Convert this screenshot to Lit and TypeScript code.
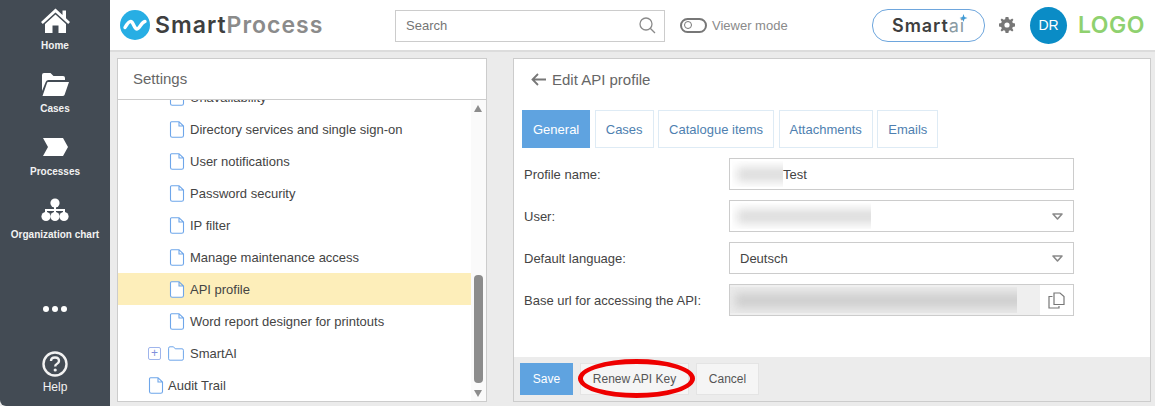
import { LitElement, html, css, svg } from 'lit';
import { customElement } from 'lit/decorators.js';

const navIcons = {
  home: svg`<path d="M14.5 0.5 L21.5 7 V2.5 H25 V10.2 L29 14 L27.2 16 L14.5 4.5 L1.8 16 L0 14 Z M14.5 6.5 L25 16 V25 H17.5 V17.5 H11.5 V25 H4 V16 Z"/>`,
  cases: svg`<path d="M1 3 Q1 1 3 1 H9.5 L12.5 4 H22 Q24 4 24 6 V8 H7.5 Q5.5 8 4.7 10 L1 19 Z M7 10 H28 L23.5 23 Q23 24 21.5 24 H1.5 L6 11 Q6.3 10 7 10 Z"/>`,
  processes: svg`<path d="M0 1 H20 L25 10 L20 19 H0 L5 10 Z"/>`,
  org: svg`<circle cx="14" cy="5" r="4.6"/><circle cx="5" cy="18.5" r="4.6"/><circle cx="14" cy="18.5" r="4.6"/><circle cx="23" cy="18.5" r="4.6"/><path d="M13 8 H15 V11 H24 V15 H22 V13 H15 V15 H13 V13 H6 V15 H4 V11 H13 Z"/>`,
};

const pageIcon = html`<svg class="tree-icon" width="16" height="17" viewBox="0 0 16 17"><path d="M2.5 .7 H10 L14.5 5 V14.5 Q14.5 16.3 12.7 16.3 H3.3 Q1.5 16.3 1.5 14.5 V1.7 Q1.5 .7 2.5 .7 Z M10 .7 V5 H14.5" fill="#fff" stroke="#6ea6ea" stroke-width="1.1"/></svg>`;

const folderIcon = html`<svg class="tree-icon" width="16" height="15" viewBox="0 0 16 15"><path d="M.6 2.2 Q.6 .8 2 .8 H5.5 L7.2 2.8 H14 Q15.4 2.8 15.4 4.2 V12.8 Q15.4 14.2 14 14.2 H2 Q.6 14.2 .6 12.8 Z" fill="#fff" stroke="#6ea6ea" stroke-width="1"/></svg>`;

const caret = html`<svg class="caret" width="11" height="7" viewBox="0 0 11 7"><path d="M1 1 H10 L5.5 6 Z" fill="#fff" stroke="#8a8a8a" stroke-width="1.6" stroke-linejoin="round"/></svg>`;

@customElement('app-root')
export class AppRoot extends LitElement {
  static styles = css`
    :host {
      display: grid;
      grid-template-columns: 110px 1fr;
      grid-template-rows: 406px;
      height: 406px;
      overflow: hidden;
      font-family: "Liberation Sans", Arial, sans-serif;
      font-size: 13px;
      color: #444;
      background: #ebebeb;
    }

    .sidebar {
      display: flex;
      flex-direction: column;
      background: #434b54;
      color: #fff;
      border-bottom-left-radius: 6px;
    }
    .nav-item {
      display: flex;
      flex-direction: column;
      flex: none;
      align-items: center;
      height: 63px;
      font-size: 10px;
      font-weight: bold;
      color: #f2f2f2;
    }
    .nav-icon {
      display: flex;
      align-items: center;
      justify-content: center;
      height: 42px;
      margin-bottom: -2px;
      fill: #fff;
    }
    .dots {
      display: flex;
      flex: none;
      justify-content: center;
      gap: 3px;
      margin-top: 54px;
      margin-bottom: 37px;
    }
    .dots i {
      width: 6px;
      height: 6px;
      border-radius: 50%;
      background: #fff;
    }
    .help { height: 45px; font-size: 12px; font-weight: normal; }
    .help .nav-icon { height: 30px; margin-bottom: 1px; }

    .main { display: flex; flex-direction: column; min-width: 0; min-height: 0; }

    header {
      display: flex;
      align-items: center;
      flex: none;
      height: 50px;
      padding-left: 10px;
      background: #fff;
      border-bottom: 2px solid #dcdcdc;
    }
    .brand {
      display: flex;
      align-items: center;
      gap: 5px;
      width: 275px;
      font-family: Inter, sans-serif;
      font-size: 23px;
      font-weight: 600;
      letter-spacing: 1px;
      color: #3f3f3f;
    }
    .brand span { color: #8b8b8b; }
    .search {
      display: flex;
      align-items: center;
      justify-content: space-between;
      box-sizing: border-box;
      width: 270px;
      height: 32px;
      margin-top: 1px;
      padding: 0 8px 0 10px;
      border: 1px solid #ccc;
      color: #757575;
    }
    .viewer {
      display: flex;
      align-items: center;
      gap: 5px;
      margin-left: 15px;
      width: 192px;
      color: #8a8a8a;
    }
    .toggle {
      box-sizing: border-box;
      display: flex;
      align-items: center;
      width: 27px;
      height: 15px;
      padding-left: 2px;
      border: 2px solid #777;
      border-radius: 8px;
    }
    .toggle i {
      box-sizing: border-box;
      width: 8px;
      height: 8px;
      border: 1.5px solid #777;
      border-radius: 50%;
    }
    .smartai {
      position: relative;
      display: flex;
      align-items: center;
      justify-content: center;
      box-sizing: border-box;
      width: 113px;
      height: 33px;
      border: 1px solid #6ea6dd;
      border-radius: 16px;
      font-family: Inter, sans-serif;
      font-size: 18px;
      font-weight: 600;
      letter-spacing: .9px;
      color: #3f3f3f;
    }
    .smartai span { color: #8a9ba3; font-weight: 400; }
    .smartai svg { position: absolute; right: 16px; top: 2px; }
    .gear { margin-left: 14px; fill: #777; }
    .avatar {
      display: flex;
      align-items: center;
      justify-content: center;
      width: 37px;
      height: 37px;
      margin-left: 15px;
      border-radius: 50%;
      background: #0a8cc6;
      color: #fff;
      font-size: 14px;
    }
    .logo {
      margin-left: 11px;
      font-family: Inter, sans-serif;
      font-size: 23px;
      font-weight: 600;
      letter-spacing: .5px;
      color: #8fd16f;
    }

    .content {
      flex: 1;
      min-height: 0;
      display: flex;
      gap: 26px;
      padding: 6px 4px 4px 7px;
    }
    .panel {
      display: flex;
      flex-direction: column;
      box-sizing: border-box;
      background: #fff;
      border: 1px solid #ccc;
      min-height: 0;
    }

    .tree-panel { width: 370px; }
    .panel-title {
      flex: none;
      box-sizing: border-box;
      height: 41px;
      padding: 11px 15px;
      font-size: 15px;
      line-height: 18px;
      color: #666;
      border-bottom: 1px solid #ccc;
    }
    .tree-body { flex: 1; display: flex; min-height: 0; overflow: hidden; }
    .tree { flex: 1; margin-top: -19px; }
    .row {
      display: flex;
      align-items: center;
      height: 32px;
      color: #444;
    }
    .row.l2 { padding-left: 51px; gap: 5px; }
    .row.l1 { padding-left: 30px; gap: 4px; }
    .row.l1f { padding-left: 30px; gap: 6px; }
    .row.on { background: #fdeeba; }
    .plus {
      box-sizing: border-box;
      display: flex;
      align-items: center;
      justify-content: center;
      width: 13px;
      height: 13px;
      border: 1px solid #9fb5ec;
      border-radius: 2px;
      color: #7f8fdc;
      font-size: 12px;
      line-height: 1;
      margin-right: 1px;
    }
    .scroll {
      position: relative;
      flex: none;
      width: 15px;
      background: #fafafa;
    }
    .arrow {
      position: absolute;
      left: 3px;
      width: 0;
      height: 0;
      border-left: 4.5px solid transparent;
      border-right: 4.5px solid transparent;
    }
    .arrow.up { top: 5px; border-bottom: 7px solid #8c8c8c; }
    .arrow.down { bottom: 4px; border-top: 7px solid #8c8c8c; }
    .thumb {
      position: absolute;
      left: 3px;
      top: 175px;
      width: 9px;
      height: 108px;
      border-radius: 4px;
      background: #8c8c8c;
    }

    .edit-panel { flex: 1; min-width: 0; }
    .edit-body { flex: 1; min-height: 0; padding: 0 8px; }
    .edit-title {
      display: flex;
      align-items: center;
      gap: 6px;
      height: 40px;
      padding-left: 9px;
      font-size: 15px;
      color: #666;
    }
    .tabs { display: flex; gap: 4.5px; margin-top: 11px; }
    .tab {
      box-sizing: border-box;
      display: flex;
      align-items: center;
      justify-content: center;
      height: 38px;
      padding: 0 10px;
      border: 1px solid #deebf5;
      color: #4e7fb0;
    }
    .tab.on { border-color: #5fa3e0; background: #5fa3e0; color: #fff; }
    .fields {
      display: grid;
      grid-template-columns: 207px 345px;
      row-gap: 10px;
      margin-top: 10px;
      align-items: center;
    }
    .fields label { padding-left: 2px; color: #444; }
    .field {
      box-sizing: border-box;
      display: flex;
      align-items: center;
      height: 32px;
      padding: 0 2px;
      border: 1px solid #ccc;
      color: #444;
    }
    .pad { padding-left: 10px; }
    .caret { margin-left: auto; margin-right: 8px; }
    .clip {
      display: flex;
      align-items: center;
      flex: none;
      height: 26px;
      overflow: hidden;
    }
    .smudge {
      flex: none;
      width: calc(100% + 20px);
      height: 15px;
      margin-left: 5px;
      background: #dedede;
      filter: blur(5px);
    }
    .field.ro { padding: 0; background: #efefef; justify-content: space-between; }
    .field.ro .clip { background: #ebebeb; }
    .field.ro .smudge { background: #cfcfcf; }
    .copy {
      display: flex;
      align-items: center;
      justify-content: center;
      flex: none;
      width: 33px;
      height: 100%;
      background: #fff;
    }

    .actions {
      position: relative;
      display: flex;
      gap: 7px;
      flex: none;
      height: 44px;
      box-sizing: border-box;
      padding: 6px;
      background: #ececec;
    }
    .btn {
      box-sizing: border-box;
      display: flex;
      align-items: center;
      justify-content: center;
      height: 32px;
      border: 1px solid #e4e4e4;
      background: #f5f5f5;
      color: #555;
      font-size: 12px;
    }
    .btn.save { width: 53px; border-color: #5fa3e0; background: #5fa3e0; color: #fff; }
    .btn.renew { width: 109px; }
    .btn.cancel { width: 63px; }
    .ring {
      position: absolute;
      left: 64px;
      top: 2px;
      width: 117px;
      height: 39px;
      box-sizing: border-box;
      border: 5px solid #ee0000;
      border-radius: 50%;
    }
  `;

  private nav(icon: unknown, w: number, h: number, label: string) {
    return html`<div class="nav-item">
      <div class="nav-icon"><svg width=${w} height=${h} viewBox="0 0 ${w} ${h}">${icon}</svg></div>
      ${label}
    </div>`;
  }

  private smudge(width: number) {
    return html`<div class="clip" style="width:${width}px"><div class="smudge"></div></div>`;
  }

  render() {
    return html`
      <aside class="sidebar">
        ${this.nav(navIcons.home, 29, 26, 'Home')}
        ${this.nav(navIcons.cases, 29, 25, 'Cases')}
        ${this.nav(navIcons.processes, 25, 20, 'Processes')}
        ${this.nav(navIcons.org, 28, 24, 'Organization chart')}
        <div class="dots"><i></i><i></i><i></i></div>
        <div class="nav-item help">
          <div class="nav-icon">
            <svg width="26" height="26" viewBox="0 0 26 26">
              <circle cx="13" cy="13" r="11.5" fill="none" stroke="#f2f2f2" stroke-width="2.4"/>
              <path d="M9 10 Q9 6.5 13 6.5 Q17 6.5 17 10 Q17 12 14.8 13 Q13.2 13.8 13.2 15.5" fill="none" stroke="#f2f2f2" stroke-width="2.4"/>
              <circle cx="13.2" cy="19" r="1.6" fill="#f2f2f2"/>
            </svg>
          </div>
          Help
        </div>
      </aside>

      <div class="main">
        <header>
          <div class="brand">
            <svg width="30" height="30" viewBox="0 0 30 30">
              <circle cx="15" cy="15" r="15" fill="#27aee4"/>
              <path d="M5 17.5 C7 14 9 11 11 11.5 C13.5 12 14 19 17 19 C20 19 21 12 25 11.5" fill="none" stroke="#fff" stroke-width="3.4" stroke-linecap="round"/>
            </svg>
            <div>Smart<span>Process</span></div>
          </div>
          <div class="search">
            Search
            <svg width="17" height="17" viewBox="0 0 17 17" fill="none" stroke="#8a8a8a" stroke-width="1.3">
              <circle cx="7" cy="7" r="6"/><path d="M11.2 11.2 L16 16"/>
            </svg>
          </div>
          <div class="viewer"><div class="toggle"><i></i></div>Viewer mode</div>
          <div class="smartai">
            Smart<span>ai</span>
            <svg width="11" height="11" viewBox="0 0 11 11" fill="#3f9bd6">
              <path d="M6.5 2 L7.5 5 L10.5 6 L7.5 7 L6.5 10 L5.5 7 L2.5 6 L5.5 5 Z"/>
            </svg>
          </div>
          <svg class="gear" width="16" height="16" viewBox="0 0 16 16">
            <path fill-rule="evenodd" d="M6.6 0 H9.4 L9.9 2.2 L11.3 2.8 L13.2 1.6 L14.4 2.8 L13.2 4.7 L13.8 6.1 L16 6.6 V9.4 L13.8 9.9 L13.2 11.3 L14.4 13.2 L13.2 14.4 L11.3 13.2 L9.9 13.8 L9.4 16 H6.6 L6.1 13.8 L4.7 13.2 L2.8 14.4 L1.6 13.2 L2.8 11.3 L2.2 9.9 L0 9.4 V6.6 L2.2 6.1 L2.8 4.7 L1.6 2.8 L2.8 1.6 L4.7 2.8 L6.1 2.2 Z M8 5.4 A2.6 2.6 0 1 0 8 10.6 A2.6 2.6 0 1 0 8 5.4 Z"/>
          </svg>
          <div class="avatar">DR</div>
          <div class="logo">LOGO</div>
        </header>

        <div class="content">
          <section class="panel tree-panel">
            <div class="panel-title">Settings</div>
            <div class="tree-body">
              <div class="tree">
                <div class="row l2">${pageIcon}Unavailability</div>
                <div class="row l2">${pageIcon}Directory services and single sign-on</div>
                <div class="row l2">${pageIcon}User notifications</div>
                <div class="row l2">${pageIcon}Password security</div>
                <div class="row l2">${pageIcon}IP filter</div>
                <div class="row l2">${pageIcon}Manage maintenance access</div>
                <div class="row l2 on">${pageIcon}API profile</div>
                <div class="row l2">${pageIcon}Word report designer for printouts</div>
                <div class="row l1f"><span class="plus">+</span>${folderIcon}SmartAI</div>
                <div class="row l1">${pageIcon}Audit Trail</div>
              </div>
              <div class="scroll">
                <div class="arrow up"></div>
                <div class="thumb"></div>
                <div class="arrow down"></div>
              </div>
            </div>
          </section>

          <section class="panel edit-panel">
            <div class="edit-body">
              <div class="edit-title">
                <svg width="15" height="13" viewBox="0 0 15 13" fill="none" stroke="#777" stroke-width="1.8">
                  <path d="M7 1 L1.5 6.5 L7 12 M1.5 6.5 H15"/>
                </svg>
                Edit API profile
              </div>
              <div class="tabs">
                <div class="tab on">General</div>
                <div class="tab">Cases</div>
                <div class="tab">Catalogue items</div>
                <div class="tab">Attachments</div>
                <div class="tab">Emails</div>
              </div>
              <div class="fields">
                <label>Profile name:</label>
                <div class="field">${this.smudge(51)}Test</div>
                <label>User:</label>
                <div class="field">${this.smudge(139)}${caret}</div>
                <label>Default language:</label>
                <div class="field pad">Deutsch${caret}</div>
                <label>Base url for accessing the API:</label>
                <div class="field ro">
                  ${this.smudge(287)}
                  <div class="copy">
                    <svg width="17" height="17" viewBox="0 0 17 17" fill="none" stroke="#777" stroke-width="1.2">
                      <path d="M6 1 H12 L16 4.5 V12.5 H6 Z M4.5 4.5 H1 V16 H11 V14"/>
                    </svg>
                  </div>
                </div>
              </div>
            </div>
            <div class="actions">
              <div class="btn save">Save</div>
              <div class="btn renew">Renew API Key</div>
              <div class="btn cancel">Cancel</div>
              <div class="ring"></div>
            </div>
          </section>
        </div>
      </div>
    `;
  }
}
